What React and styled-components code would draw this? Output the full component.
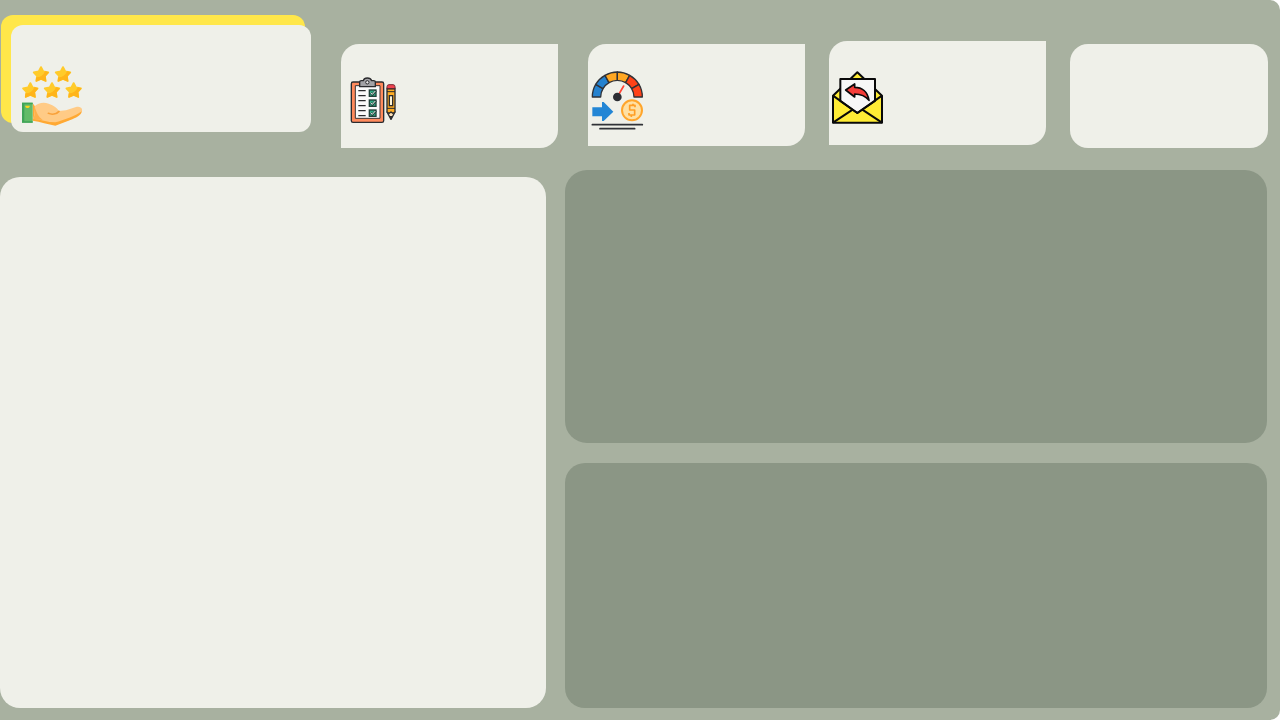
import React from 'react';
import styled, { createGlobalStyle } from 'styled-components';

const GlobalStyle = createGlobalStyle`
  *, *::before, *::after { box-sizing: border-box; }
  body { margin: 0; background: #ffffff; font-family: "Liberation Sans", Arial, sans-serif; }
`;

const Page = styled.div`
  display: flex;
  flex-direction: column;
  gap: 22px;
  min-height: 100vh;
  padding: 15px 0 12px;
  background: #a8b1a0;
  border-radius: 0 10px 10px 0;
`;

const Header = styled.header`
  display: flex;
  align-items: flex-start;
  gap: 30px;
  padding: 0 12px 0 1px;
`;

const Featured = styled.section`
  display: grid;
  flex: 310 1 0;
  height: 117px;
`;

const FeaturedBacking = styled.div`
  grid-area: 1 / 1;
  margin: 0 6px 9px 0;
  border-radius: 12px;
  background: #ffe74a;
`;

const FeaturedCard = styled.div`
  grid-area: 1 / 1;
  margin: 10px 0 0 10px;
  padding: 35px 3px 0;
  border-radius: 12px;
  background: #eff0e9;
`;

const CardGroup = styled.div`
  display: flex;
  align-items: flex-start;
  flex: ${(p) => p.$grow} 1 ${(p) => p.$gaps || 0}px;
  gap: 24px;
`;

const Card = styled.section`
  flex: ${(p) => p.$grow || 217} 1 0;
  height: ${(p) => p.$height || 104}px;
  margin-top: ${(p) => (p.$raised ? 26 : 29)}px;
  padding-top: 20px;
  border-radius: ${(p) => (p.$rounded ? '18px' : '18px 0 18px 0')};
  background: #eff0e9;
`;

const Main = styled.main`
  display: grid;
  grid-template-columns: 546fr 702fr;
  gap: 19px;
  flex: 1;
  padding-right: 13px;
`;

const LightPanel = styled.section`
  margin-top: 7px;
  border-radius: 20px;
  background: #eff0e9;
`;

const Column = styled.div`
  display: flex;
  flex-direction: column;
  gap: 20px;
`;

const DarkPanel = styled.section`
  flex: ${(p) => p.$grow} 1 0;
  border-radius: ${(p) => p.$radius}px;
  background: #8b9685;
`;

const Icon = styled.svg`
  display: block;
`;

const starPath =
  'M0 -22 L7 -9 L22 -6 L12 5 L14 20 L0 14 L-14 20 L-12 5 L-22 -6 L-7 -9 Z';
const starShade =
  'M21 -5 L12 5 L14 20 L0 14 L-14 20 L-13 11 C-2 11 10 4 13 -7 Z';

function Star({ x, y }) {
  return (
    <g transform={`translate(${x} ${y})`} strokeLinejoin="round">
      <path d={starPath} fill="#ffcb2b" stroke="#ffcb2b" strokeWidth="5" />
      <path d={starShade} fill="#ffb51b" stroke="#ffb51b" strokeWidth="4" />
    </g>
  );
}

function RatingIcon() {
  return (
    <Icon width="76" height="72" viewBox="0 0 228 216" role="img" aria-label="Rating">
      <Star x={81} y={43} />
      <Star x={147} y={43} />
      <Star x={49} y={91} />
      <Star x={114} y={91} />
      <Star x={179} y={91} />
      <path d="M56 130 L64 140 L66 176 L56 182 Z" fill="#ffa834" />
      <path d="M62 139 C72 129 88 126 104 131 C120 136 130 145 135 153 L156 151 L186 141 C202 136 210 150 200 160 C185 174 149 188 126 194 C104 192 79 183 56 181 C61 168 63 150 62 139 Z" fill="#ffcb86" />
      <path d="M56 176 C78 178 101 187 124 187 C149 181 184 168 203 154 C203 163 192 171 175 178 L124 197 C102 193 79 185 56 182 Z" fill="#ffa933" />
      <path d="M62 140 C68 158 72 168 86 180 L58 178 C62 166 64 153 62 140 Z" fill="#ffb14c" />
      <path d="M103 160 C113 164 127 163 135 154" fill="none" stroke="#f9a13a" strokeWidth="5" strokeLinecap="round" />
      <path d="M24 128 H56 V188 H24 Z" fill="#62bb68" />
      <path d="M24 128 H31 V188 H24 Z M31 128 H56 V133 H31 Z M31 184 H56 V188 H31 Z" fill="#3fa457" />
      <path d="M34 137 H47 V141 L43 144 H38 L34 141 Z" fill="#fdd41c" />
    </Icon>
  );
}

function ChecklistIcon() {
  return (
    <Icon width="63" height="66" viewBox="3 -18 189 198" role="img" aria-label="Checklist">
      <rect x="34" y="36" width="97" height="121" rx="5" fill="#ff8a5c" stroke="#2b2b2e" strokeWidth="4" />
      <path d="M46 47 H120 V145 H46 Z" fill="#fafafa" stroke="#3a3434" strokeWidth="3" />
      <path d="M59 50 V36 Q59 32 64 32 H70 Q72 24 82 24 Q92 24 95 32 H101 Q106 32 106 36 V50 Z" fill="#a2a2a6" stroke="#2b2b2e" strokeWidth="4" strokeLinejoin="round" />
      <circle cx="82" cy="37" r="5" fill="#e7e7e7" stroke="#2b2b2e" strokeWidth="3" />
      <path d="M55 62 H77 M55 77 H77 M55 92 H77 M55 107 H77 M55 122 H77 M55 137 H77" stroke="#2b2b2e" strokeWidth="4" />
      {[60, 90, 120].map((y) => (
        <g key={y} transform={`translate(88 ${y})`}>
          <rect width="20" height="19" fill="#2ea983" stroke="#22423a" strokeWidth="4" />
          <path d="M4 9 L9 14 L20 2" fill="none" stroke="#22423a" strokeWidth="7" />
          <path d="M4 9 L9 13 L18 3" fill="none" stroke="#effff9" strokeWidth="3" />
        </g>
      ))}
      <path d="M141 126 H165 L153 148 Z" fill="#ffe1b5" stroke="#2b2b2e" strokeWidth="4" strokeLinejoin="round" />
      <path d="M148 138 H158 L153 148 Z" fill="#2b2b2e" />
      <path d="M141 55 H165 V126 L159 130 L153 126 L147 130 L141 126 Z" fill="#ffad24" stroke="#2b2b2e" strokeWidth="4" />
      <path d="M141 56 V50 Q141 44 147 44 H159 Q165 44 165 50 V56 Z" fill="#f04350" stroke="#7c2a32" strokeWidth="3" />
      <path d="M141 57 H165 M141 65 H165 M141 115 H165" stroke="#2b2b2e" strokeWidth="3" />
      <rect x="148" y="77" width="10" height="30" fill="#fff5d8" stroke="#2b2b2e" strokeWidth="4" />
    </Icon>
  );
}

function GaugeIcon() {
  return (
    <Icon width="61" height="71" viewBox="9 -3 183 213" role="img" aria-label="Cost performance">
      <g stroke="#303237" strokeWidth="4" strokeLinejoin="round">
        <path d="M22 96 A75 75 0 0 1 32 58 L54 71 A50 50 0 0 0 47 96 Z" fill="#2582cf" />
        <path d="M32 58 A75 75 0 0 1 60 31 L72 53 A50 50 0 0 0 54 71 Z" fill="#2582cf" />
        <path d="M60 31 A75 75 0 0 1 97 21 V46 A50 50 0 0 0 72 53 Z" fill="#ffa722" />
        <path d="M97 21 A75 75 0 0 1 134 31 L122 53 A50 50 0 0 0 97 46 Z" fill="#ffa722" />
        <path d="M134 31 A75 75 0 0 1 162 58 L140 71 A50 50 0 0 0 122 53 Z" fill="#ff4218" />
        <path d="M162 58 A75 75 0 0 1 172 96 H147 A50 50 0 0 0 140 71 Z" fill="#ff4218" />
      </g>
      <path d="M102 87 L116 63" stroke="#ff4535" strokeWidth="5" strokeLinecap="round" />
      <circle cx="97" cy="96" r="13" fill="#2c2e33" />
      <path d="M22 127 H51 V111 H56 L85 140 L56 168 H51 V154 H22 Z" fill="#2386d5" />
      <circle cx="141" cy="136" r="30" fill="#ffe0a3" stroke="#ffa52b" strokeWidth="6" />
      <path d="M150 127 V121 H134 V135 H149 V150 H132 V144 M144 116 V121 M139 150 V156" fill="none" stroke="#ff9e25" strokeWidth="5" strokeLinejoin="round" />
      <path d="M22 179 H172 M45 191 H149" stroke="#303237" strokeWidth="5" strokeLinecap="round" />
    </Icon>
  );
}

function ReplyIcon() {
  return (
    <Icon width="60" height="68" viewBox="12 -12 180 204" role="img" aria-label="Replies">
      <g stroke="#090909" strokeWidth="6" strokeLinejoin="round">
        <path d="M24 92 L97 22 L171 92 V173 H24 Z" fill="#ffec35" />
        <path d="M24 173 L83 134 M171 173 L112 134" />
        <path d="M46 108 V42 H150 V108 L97 144 Z" fill="#f7f7f7" />
        <path d="M24 92 L97 144 L171 92" fill="none" />
        <path d="M62 75 L89 57 V67 C111 67 128 80 132 106 C120 91 106 87 89 87 V96 Z" fill="#f53e3a" strokeWidth="5" />
      </g>
    </Icon>
  );
}

export default function App() {
  return (
    <>
      <GlobalStyle />
      <Page>
        <Header>
          <Featured>
            <FeaturedBacking />
            <FeaturedCard>
              <RatingIcon />
            </FeaturedCard>
          </Featured>
          <Card>
            <ChecklistIcon />
          </Card>
          <CardGroup $grow={632} $gaps={48}>
            <Card $height={102}>
              <GaugeIcon />
            </Card>
            <Card $raised>
              <ReplyIcon />
            </Card>
            <Card $grow={198} $rounded />
          </CardGroup>
        </Header>
        <Main>
          <LightPanel />
          <Column>
            <DarkPanel $grow={273} $radius={22} />
            <DarkPanel $grow={245} $radius={20} />
          </Column>
        </Main>
      </Page>
    </>
  );
}
